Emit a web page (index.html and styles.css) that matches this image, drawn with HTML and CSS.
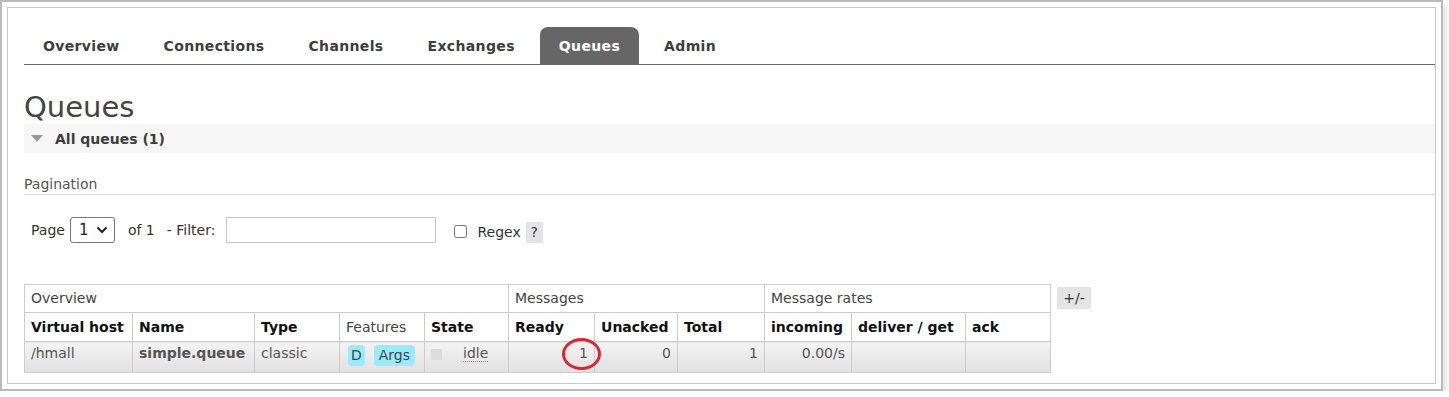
FILE: index.html
```html
<!DOCTYPE html>
<html lang="en">
<head>
<meta charset="utf-8">
<title>Queues</title>
<link rel="stylesheet" href="styles.css">
</head>
<body>
<div class="frame">
  <div class="page">
    <ul class="menu">
      <li><a>Overview</a></li>
      <li><a>Connections</a></li>
      <li><a>Channels</a></li>
      <li><a>Exchanges</a></li>
      <li class="active"><a>Queues</a></li>
      <li><a>Admin</a></li>
    </ul>
    <h1 class="title">Queues</h1>
    <div class="section-head"><span class="tri"></span><span>All queues (1)</span></div>
    <h3 class="pag">Pagination</h3>
    <div class="filter-row">
      <span class="lbl-page">Page</span>
      <span class="select"><span>1</span><svg class="chev" width="12" height="8" viewBox="0 0 12 8"><path d="M1.5 1.5 L6 6 L10.5 1.5" fill="none" stroke="#222" stroke-width="2"/></svg></span>
      <span class="lbl-of">of 1</span>
      <span class="lbl-filter">- Filter:</span>
      <input class="filter-input" type="text">
      <input class="cb" type="checkbox">
      <span class="lbl-regex">Regex</span>
      <span class="help">?</span>
    </div>
    <div class="table-wrap">
      <table class="queues">
        <colgroup>
          <col class="w-vhost"><col class="w-name"><col class="w-type"><col class="w-feat"><col class="w-state">
          <col class="w-ready"><col class="w-unacked"><col class="w-total">
          <col class="w-inc"><col class="w-deliver"><col class="w-ack">
        </colgroup>
        <thead>
          <tr class="group">
            <th colspan="5">Overview</th>
            <th colspan="3">Messages</th>
            <th colspan="3">Message rates</th>
          </tr>
          <tr class="cols">
            <th>Virtual host</th>
            <th>Name</th>
            <th>Type</th>
            <th class="plain">Features</th>
            <th>State</th>
            <th>Ready</th>
            <th>Unacked</th>
            <th>Total</th>
            <th>incoming</th>
            <th>deliver / get</th>
            <th>ack</th>
          </tr>
        </thead>
        <tbody>
          <tr class="data">
            <td>/hmall</td>
            <td class="strong">simple.queue</td>
            <td>classic</td>
            <td><span class="tags"><span class="tag">D</span><span class="tag tag-wide">Args</span></span></td>
            <td><span class="state"><span class="state-box"></span><span class="idle">idle</span></span></td>
            <td class="num mark">1<span class="ring"></span></td>
            <td class="num">0</td>
            <td class="num">1</td>
            <td class="num">0.00/s</td>
            <td></td>
            <td></td>
          </tr>
        </tbody>
      </table>
      <span class="toggle">+/-</span>
    </div>
  </div>
</div>
</body>
</html>
```

FILE: styles.css
```css
* { box-sizing: border-box; }

body {
  margin: 0;
  background: #fff;
  font-family: "DejaVu Sans", Verdana, sans-serif;
  font-size: 14px;
  color: #444;
}

.frame {
  width: 1443px;
  height: 391px;
  border: 2px solid #bababa;
  padding: 5px;
  box-shadow: 4px 4px 5px rgba(0, 0, 0, 0.1);
  background: #fff;
}

.page {
  height: 100%;
  border: 1px solid #c8c8c8;
  padding: 0 0 0 16px;
}

/* menu tabs */
.menu {
  list-style: none;
  margin: 0;
  padding: 19px 0 0;
  display: flex;
  gap: 6px;
  border-bottom: 1px solid #666;
}

.menu li a {
  display: block;
  height: 37px;
  line-height: 38px;
  padding: 0 19px 0 19px;
  font-weight: bold;
  letter-spacing: 0.35px;
  color: #3d3d3d;
  border-radius: 8px 8px 0 0;
}

.menu li.active a {
  background: #666;
  color: #fff;
}

.title {
  margin: 26px 0 0;
  font-size: 29px;
  line-height: 33px;
  font-weight: normal;
  color: #444;
}

.section-head {
  height: 29px;
  background: #f6f6f6;
  display: flex;
  align-items: center;
  padding-left: 7px;
  font-weight: bold;
  color: #3d3d3d;
}

.tri {
  width: 0;
  height: 0;
  border-left: 6px solid transparent;
  border-right: 6px solid transparent;
  border-top: 7px solid #9a9a9a;
  margin-right: 12px;
}

.pag {
  margin: 23px 0 0;
  font-size: 14px;
  font-weight: normal;
  line-height: 17px;
  padding-bottom: 1px;
  border-bottom: 1px solid #e0e0e0;
  color: #555;
}

/* filter row */
.filter-row {
  margin-top: 22px;
  height: 26px;
  display: flex;
  align-items: center;
  padding-left: 7px;
  color: #333;
}

.select {
  margin-left: 5px;
  width: 45px;
  height: 26px;
  border: 1px solid #767676;
  border-radius: 3px;
  display: flex;
  align-items: center;
  justify-content: space-between;
  padding: 0 6px 0 8px;
  font-size: 15px;
  color: #222;
}

.lbl-of { margin-left: 13px; }
.lbl-filter { margin-left: 12px; }

.filter-input {
  margin: 0 0 0 11px;
  width: 210px;
  height: 26px;
  border: 1px solid #c6c6c6;
  border-radius: 0;
  padding: 0 4px;
  font: inherit;
}

.cb {
  margin: 0 0 0 18px;
  width: 13px;
  height: 13px;
  position: relative;
  top: 1px;
}

.lbl-regex {
  margin-left: 10px;
  position: relative;
  top: 2px;
}

.help {
  margin-left: 5px;
  width: 17px;
  height: 21px;
  background: #e4e4e4;
  display: flex;
  align-items: center;
  justify-content: center;
  position: relative;
  top: 2px;
  color: #333;
}

/* table */
.table-wrap {
  margin-top: 41px;
  display: flex;
  align-items: flex-start;
  gap: 6px;
}

.queues {
  table-layout: fixed;
  width: 1027px;
  border-collapse: collapse;
  border: 1px solid #ccc;
}

.w-vhost { width: 108px; }
.w-name { width: 122px; }
.w-type { width: 85px; }
.w-feat { width: 85px; }
.w-state { width: 84px; }
.w-ready { width: 86px; }
.w-unacked { width: 83px; }
.w-total { width: 87px; }
.w-inc { width: 87px; }
.w-deliver { width: 114px; }
.w-ack { width: 85px; }

.queues th,
.queues td {
  border: 1px solid #ccc;
  line-height: 17px;
  text-align: left;
  white-space: nowrap;
  overflow: visible;
}

.queues tr.group th {
  font-weight: normal;
  color: #444;
  padding: 5px 6px;
}

.queues tr.cols th {
  font-weight: bold;
  color: #111;
  padding: 6px 6px 5px;
}

.queues tr.cols th.plain {
  font-weight: normal;
  color: #444;
}

.queues tr.data td {
  vertical-align: top;
  padding: 3px 6px 6px;
  color: #555;
  background: linear-gradient(#f3f3f3, #e1e1e1);
}

.queues td.strong {
  font-weight: bold;
  color: #111;
}

.queues td.num {
  text-align: right;
  padding-right: 7px;
}

.queues td.mark {
  padding-right: 10px;
}

.tags {
  display: inline-flex;
  gap: 9px;
  padding-left: 2px;
}

.tag {
  display: inline-block;
  background: #99ebff;
  color: #444;
  border-radius: 4px;
  padding: 2px 3px;
  line-height: 17px;
}

.tag-wide {
  padding: 2px 5px;
}

.state {
  display: inline-flex;
  align-items: flex-start;
}

.state-box {
  width: 11px;
  height: 11px;
  margin-top: 4px;
  background: #dcdcdc;
}

.idle {
  margin-left: 21px;
  border-bottom: 1px dotted #888;
  line-height: 16px;
  color: #555;
}

td.mark {
  position: relative;
}

.ring {
  position: absolute;
  left: 53px;
  top: -4px;
  width: 39px;
  height: 32px;
  border: 3px solid #e3222b;
  border-radius: 50%;
}

.toggle {
  margin-top: 3px;
  width: 34px;
  height: 22px;
  background: #e4e4e4;
  display: flex;
  align-items: center;
  justify-content: center;
  color: #333;
}
```
